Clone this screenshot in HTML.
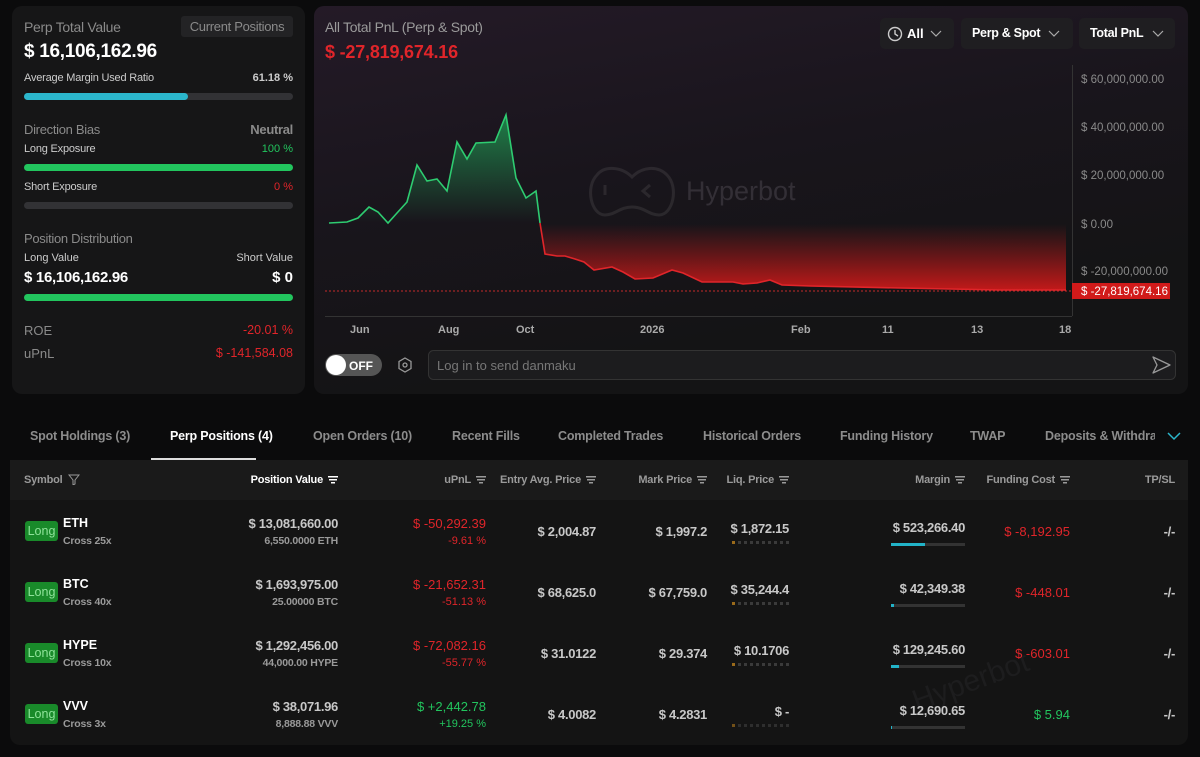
<!DOCTYPE html>
<html><head><meta charset="utf-8">
<style>
*{box-sizing:border-box;margin:0;padding:0}
body{width:1200px;height:757px;background:#0b0b0c;font-family:"Liberation Sans",sans-serif;color:#ddd;position:relative;overflow:hidden}
.a{position:absolute;white-space:nowrap}
.card{position:absolute;border-radius:10px}
.g{color:#8a8a8a}
.red{color:#e0252a}
.grn{color:#22c55e}
.bar{position:absolute;height:7px;border-radius:4px;background:#323235}
.r{text-align:right}
.b{font-weight:bold}
.hd{font-size:11px;color:#9a9a9a;font-weight:bold;letter-spacing:-.2px}
.tab{font-size:12.5px;font-weight:bold;color:#8c8c8c;top:429px;letter-spacing:-.2px}
.v{font-size:13px;font-weight:bold;color:#c8c8c8;letter-spacing:-.3px}
.s{font-size:10.5px;font-weight:bold;color:#9a9a9a;letter-spacing:-.2px}
.long{position:absolute;left:25px;width:33px;height:20px;background:#198a2a;color:#8fe39a;border-radius:3px;font-size:12.5px;text-align:center;line-height:20px}
.sym{font-size:12.5px;font-weight:bold;color:#fff;left:63px}
.dots{position:absolute;height:3px;width:58px;background:repeating-linear-gradient(90deg,#3a3a3a 0 3px,transparent 3px 6px)}
.dots:before{content:"";position:absolute;left:0;top:0;width:3px;height:3px;background:#9a6a1a}
.mb{position:absolute;left:891px;width:74px;height:3px;background:#333}
.mb i{position:absolute;left:0;top:0;height:3px;background:#22b3c8}
.fi{display:inline-block;width:10px;height:8px;margin-left:5px;vertical-align:middle;background:linear-gradient(#999,#999) 0 0/10px 1.5px no-repeat,linear-gradient(#999,#999) 1px 3px/8px 1.5px no-repeat,linear-gradient(#999,#999) 3px 6px/4px 1.5px no-repeat}
</style></head><body>

<!-- left card -->
<div class="card" style="left:12px;top:6px;width:293px;height:388px;background:#161617"></div>
<div class="a g" style="left:24px;top:19px;font-size:14px;letter-spacing:-.3px">Perp Total Value</div>
<div class="a" style="left:181px;top:16px;width:112px;height:21px;background:#232325;border-radius:3px;color:#8a8a8a;font-size:13px;text-align:center;line-height:21px;letter-spacing:-.3px">Current Positions</div>
<div class="a b" style="left:24px;top:41px;font-size:19px;color:#fff;letter-spacing:-.3px">$ 16,106,162.96</div>
<div class="a" style="left:24px;top:72px;font-size:11px;color:#ccc;letter-spacing:-.2px">Average Margin Used Ratio</div>
<div class="a b r" style="right:907px;top:72px;font-size:11px;color:#ccc">61.18 %</div>
<div class="bar" style="left:24px;top:93px;width:269px"></div>
<div class="bar" style="left:24px;top:93px;width:164px;background:#2bb6cc"></div>
<div class="a g" style="left:24px;top:122px;font-size:13px;letter-spacing:-.3px">Direction Bias</div>
<div class="a b g" style="right:907px;top:122px;font-size:13px;letter-spacing:-.3px">Neutral</div>
<div class="a" style="left:24px;top:143px;font-size:11px;color:#ccc;letter-spacing:-.2px">Long Exposure</div>
<div class="a grn" style="right:907px;top:143px;font-size:11px">100 %</div>
<div class="bar" style="left:24px;top:164px;width:269px;background:#22c55e"></div>
<div class="a" style="left:24px;top:181px;font-size:11px;color:#ccc;letter-spacing:-.2px">Short Exposure</div>
<div class="a red" style="right:907px;top:181px;font-size:11px">0 %</div>
<div class="bar" style="left:24px;top:202px;width:269px"></div>
<div class="a g" style="left:24px;top:231px;font-size:13px;letter-spacing:-.3px">Position Distribution</div>
<div class="a" style="left:24px;top:252px;font-size:11px;color:#ccc">Long Value</div>
<div class="a" style="right:907px;top:252px;font-size:11px;color:#ccc">Short Value</div>
<div class="a b" style="left:24px;top:269px;font-size:15px;color:#fff;letter-spacing:-.3px">$ 16,106,162.96</div>
<div class="a b" style="right:907px;top:269px;font-size:15px;color:#fff">$ 0</div>
<div class="bar" style="left:24px;top:294px;width:269px;background:#22c55e"></div>
<div class="a g" style="left:24px;top:323px;font-size:13px">ROE</div>
<div class="a red" style="right:907px;top:323px;font-size:12.5px">-20.01 %</div>
<div class="a g" style="left:24px;top:346px;font-size:13px">uPnL</div>
<div class="a red" style="right:907px;top:346px;font-size:12.5px">$ -141,584.08</div>

<!-- chart card -->
<div class="card" style="left:314px;top:6px;width:874px;height:388px;background:linear-gradient(170deg,#241a27 0%,#19151c 40%,#141415 75%)"></div>
<div class="a" style="left:325px;top:19px;font-size:14px;color:#9a9a9a;letter-spacing:-.3px">All Total PnL (Perp &amp; Spot)</div>
<div class="a b red" style="left:325px;top:42px;font-size:18px;letter-spacing:-.2px">$ -27,819,674.16</div>
<div class="a" style="left:880px;top:18px;width:74px;height:31px;background:#1f1e21;border-radius:5px"></div>
<svg class="a" style="left:887px;top:26px" width="16" height="16" viewBox="0 0 16 16"><circle cx="8" cy="8" r="6.5" fill="none" stroke="#ccc" stroke-width="1.4"/><path d="M8 4v4l3 2" fill="none" stroke="#ccc" stroke-width="1.4"/></svg>
<div class="a b" style="left:907px;top:26px;font-size:13px;color:#fff">All</div>
<div class="a" style="left:961px;top:18px;width:112px;height:31px;background:#1f1e21;border-radius:5px"></div>
<div class="a b" style="left:972px;top:26px;font-size:12.5px;color:#fff;letter-spacing:-.3px">Perp &amp; Spot</div>
<div class="a" style="left:1079px;top:18px;width:96px;height:31px;background:#1f1e21;border-radius:5px"></div>
<div class="a b" style="left:1090px;top:26px;font-size:12.5px;color:#fff;letter-spacing:-.3px">Total PnL</div>
<svg class="a" style="left:0;top:0" width="1200" height="60"><g fill="none" stroke="#aaa" stroke-width="1.2"><path d="M931 31l5 5 5-5"/><path d="M1049 31l5 5 5-5"/><path d="M1153 31l5 5 5-5"/></g></svg>

<svg class="a" style="left:0;top:0" width="1200" height="400">
<defs>
<linearGradient id="gg" x1="0" y1="115" x2="0" y2="223" gradientUnits="userSpaceOnUse"><stop offset="0" stop-color="#1f8a4c" stop-opacity=".9"/><stop offset="1" stop-color="#1f8a4c" stop-opacity="0"/></linearGradient>
<linearGradient id="rg" x1="0" y1="224" x2="0" y2="292" gradientUnits="userSpaceOnUse"><stop offset="0" stop-color="#c01818" stop-opacity="0"/><stop offset="1" stop-color="#d11a1a" stop-opacity=".95"/></linearGradient>
</defs>
<g opacity=".2" fill="none" stroke="#777" stroke-width="3"><path d="M597 175c8-10 25-8 35 2 10-10 25-12 35-2 12 12 6 40-8 40-10 0-15-8-27-8s-17 8-27 8c-14 0-20-28-8-40z"/><path d="M605 185v10M650 185l-7 6 7 6"/></g>
<text x="686" y="200" font-family="Liberation Sans" font-size="27" fill="#332f36">Hyperbot</text>
<path d="M540 223L545 254L557 256L565 256L575 259L584 262L594 270L612 267L623 272L635 279L653 278L672 270L683 273L702 282L733 282L743 284L757 283L770 280L782 285L810 286L900 288L1000 290L1066 290L1066 224Z" fill="url(#rg)"/>
<path d="M329 223L347 222L358 218L369 207L378 212L388 223L397 213L407 202L417 165L427 181L437 179L447 191L457 142L467 159L476 143L495 142L506 115L516 178L526 198L536 191L540 223Z" fill="url(#gg)"/>
<path d="M329 223L347 222L358 218L369 207L378 212L388 223L397 213L407 202L417 165L427 181L437 179L447 191L457 142L467 159L476 143L495 142L506 115L516 178L526 198L536 191L540 223" fill="none" stroke="#2ecc71" stroke-width="1.6"/>
<path d="M540 223L545 254L557 256L565 256L575 259L584 262L594 270L612 267L623 272L635 279L653 278L672 270L683 273L702 282L733 282L743 284L757 283L770 280L782 285L810 286L900 288L1000 290L1066 290" fill="none" stroke="#e0252a" stroke-width="1.6"/>
<path d="M325 291H1072" stroke="#c42a2a" stroke-width="1" stroke-dasharray="2 2"/>
<path d="M325 316.5H1072M1072.5 65V316" stroke="#333" stroke-width="1"/>
<g font-family="Liberation Sans" font-size="11.5" fill="#8a8a8a">
<text x="1081" y="83">$ 60,000,000.00</text><text x="1081" y="131">$ 40,000,000.00</text><text x="1081" y="179">$ 20,000,000.00</text><text x="1081" y="228">$ 0.00</text><text x="1081" y="275">$ -20,000,000.00</text>
</g>
<rect x="1072" y="283" width="98" height="16" fill="#d11a1a"/>
<text x="1081" y="295" font-family="Liberation Sans" font-size="11.5" fill="#fff">$ -27,819,674.16</text>
<g font-family="Liberation Sans" font-size="11" fill="#aaa" font-weight="bold">
<text x="350" y="333">Jun</text><text x="438" y="333">Aug</text><text x="516" y="333">Oct</text><text x="640" y="333">2026</text><text x="791" y="333">Feb</text><text x="882" y="333">11</text><text x="971" y="333">13</text><text x="1059" y="333">18</text>
</g>
<rect x="325" y="354" width="57" height="22" rx="11" fill="#555"/><circle cx="336" cy="365" r="10" fill="#fff"/>
<text x="349" y="370" font-family="Liberation Sans" font-size="12" fill="#fff" font-weight="bold">OFF</text>
<path d="M405 358l6 3.5v7l-6 3.5-6-3.5v-7z" fill="none" stroke="#999" stroke-width="1.3"/><circle cx="405" cy="365" r="2" fill="none" stroke="#999" stroke-width="1.3"/>
<rect x="428.5" y="350.5" width="747" height="29" rx="5" fill="#1c1c1e" stroke="#333"/>
<text x="437" y="370" font-family="Liberation Sans" font-size="13" fill="#777">Log in to send danmaku</text>
<path d="M1153 357l17 8-17 8 4-8z" fill="none" stroke="#999" stroke-width="1.3" stroke-linejoin="round"/>
</svg>

<!-- tabs -->
<div class="a tab" style="left:30px">Spot Holdings (3)</div>
<div class="a tab" style="left:170px;color:#fff">Perp Positions (4)</div>
<div class="a" style="left:151px;top:458px;width:105px;height:2px;background:#ddd"></div>
<div class="a tab" style="left:313px">Open Orders (10)</div>
<div class="a tab" style="left:452px">Recent Fills</div>
<div class="a tab" style="left:558px">Completed Trades</div>
<div class="a tab" style="left:703px">Historical Orders</div>
<div class="a tab" style="left:840px">Funding History</div>
<div class="a tab" style="left:970px">TWAP</div>
<div class="a tab" style="left:1045px;width:110px;overflow:hidden">Deposits &amp; Withdrawals</div>
<svg class="a" style="left:1166px;top:430px" width="16" height="12"><path d="M2 3l6 6 6-6" fill="none" stroke="#2bb6cc" stroke-width="1.5"/></svg>

<!-- table -->
<div class="card" style="left:10px;top:460px;width:1178px;height:285px;background:#141414;border-radius:0 0 10px 10px"></div>
<div class="a" style="left:910px;top:665px;font-size:30px;color:#1d1d1e;transform:rotate(-20deg)">Hyperbot</div>
<div class="a" style="left:10px;top:460px;width:1178px;height:40px;background:#1a1a1a"></div>
<div class="a hd" style="left:24px;top:474px">Symbol <svg width="12" height="11" style="vertical-align:-2px;margin-left:3px"><path d="M1 1h10L7 6v4L5 11V6z" fill="none" stroke="#999"/></svg></div>
<div class="a hd r" style="right:862px;top:474px;color:#fff">Position Value<span class="fi" style="background:linear-gradient(#fff,#fff) 0 0/10px 1.5px no-repeat,linear-gradient(#fff,#fff) 1px 3px/8px 1.5px no-repeat,linear-gradient(#fff,#fff) 3px 6px/4px 1.5px no-repeat"></span></div>
<div class="a hd r" style="right:714px;top:474px">uPnL<span class="fi"></span></div>
<div class="a hd r" style="right:604px;top:474px">Entry Avg. Price<span class="fi"></span></div>
<div class="a hd r" style="right:493px;top:474px">Mark Price<span class="fi"></span></div>
<div class="a hd r" style="right:411px;top:474px">Liq. Price<span class="fi"></span></div>
<div class="a hd r" style="right:235px;top:474px">Margin<span class="fi"></span></div>
<div class="a hd r" style="right:130px;top:474px">Funding Cost<span class="fi"></span></div>
<div class="a hd r" style="right:25px;top:474px">TP/SL</div>

<!-- row 1 -->
<div class="long" style="top:521px">Long</div>
<div class="a sym" style="top:516px">ETH</div><div class="a s" style="left:63px;top:535px">Cross 25x</div>
<div class="a v r" style="right:862px;top:516px">$ 13,081,660.00</div><div class="a s r" style="right:862px;top:535px">6,550.0000 ETH</div>
<div class="a red r" style="right:714px;top:516px;font-size:13px">$ -50,292.39</div><div class="a red r" style="right:714px;top:535px;font-size:11px">-9.61 %</div>
<div class="a v r" style="right:604px;top:524px">$ 2,004.87</div>
<div class="a v r" style="right:493px;top:524px">$ 1,997.2</div>
<div class="a v r" style="right:411px;top:521px">$ 1,872.15</div><div class="dots" style="left:732px;top:541px"></div>
<div class="a v r" style="right:235px;top:520px">$ 523,266.40</div><div class="mb" style="top:543px"><i style="width:34px"></i></div>
<div class="a red r" style="right:130px;top:524px;font-size:13px">$ -8,192.95</div>
<div class="a v r" style="right:25px;top:524px">-/-</div>

<!-- row 2 -->
<div class="long" style="top:582px">Long</div>
<div class="a sym" style="top:577px">BTC</div><div class="a s" style="left:63px;top:596px">Cross 40x</div>
<div class="a v r" style="right:862px;top:577px">$ 1,693,975.00</div><div class="a s r" style="right:862px;top:596px">25.00000 BTC</div>
<div class="a red r" style="right:714px;top:577px;font-size:13px">$ -21,652.31</div><div class="a red r" style="right:714px;top:596px;font-size:11px">-51.13 %</div>
<div class="a v r" style="right:604px;top:585px">$ 68,625.0</div>
<div class="a v r" style="right:493px;top:585px">$ 67,759.0</div>
<div class="a v r" style="right:411px;top:582px">$ 35,244.4</div><div class="dots" style="left:732px;top:602px"></div>
<div class="a v r" style="right:235px;top:581px">$ 42,349.38</div><div class="mb" style="top:604px"><i style="width:3px"></i></div>
<div class="a red r" style="right:130px;top:585px;font-size:13px">$ -448.01</div>
<div class="a v r" style="right:25px;top:585px">-/-</div>

<!-- row 3 -->
<div class="long" style="top:643px">Long</div>
<div class="a sym" style="top:638px">HYPE</div><div class="a s" style="left:63px;top:657px">Cross 10x</div>
<div class="a v r" style="right:862px;top:638px">$ 1,292,456.00</div><div class="a s r" style="right:862px;top:657px">44,000.00 HYPE</div>
<div class="a red r" style="right:714px;top:638px;font-size:13px">$ -72,082.16</div><div class="a red r" style="right:714px;top:657px;font-size:11px">-55.77 %</div>
<div class="a v r" style="right:604px;top:646px">$ 31.0122</div>
<div class="a v r" style="right:493px;top:646px">$ 29.374</div>
<div class="a v r" style="right:411px;top:643px">$ 10.1706</div><div class="dots" style="left:732px;top:663px"></div>
<div class="a v r" style="right:235px;top:642px">$ 129,245.60</div><div class="mb" style="top:665px"><i style="width:8px"></i></div>
<div class="a red r" style="right:130px;top:646px;font-size:13px">$ -603.01</div>
<div class="a v r" style="right:25px;top:646px">-/-</div>

<!-- row 4 -->
<div class="long" style="top:704px">Long</div>
<div class="a sym" style="top:699px">VVV</div><div class="a s" style="left:63px;top:718px">Cross 3x</div>
<div class="a v r" style="right:862px;top:699px">$ 38,071.96</div><div class="a s r" style="right:862px;top:718px">8,888.88 VVV</div>
<div class="a grn r" style="right:714px;top:699px;font-size:13px">$ +2,442.78</div><div class="a grn r" style="right:714px;top:718px;font-size:11px">+19.25 %</div>
<div class="a v r" style="right:604px;top:707px">$ 4.0082</div>
<div class="a v r" style="right:493px;top:707px">$ 4.2831</div>
<div class="a v r" style="right:411px;top:704px">$ -</div><div class="dots" style="left:732px;top:724px;opacity:.7"></div>
<div class="a v r" style="right:235px;top:703px">$ 12,690.65</div><div class="mb" style="top:726px"><i style="width:1px"></i></div>
<div class="a grn r" style="right:130px;top:707px;font-size:13px">$ 5.94</div>
<div class="a v r" style="right:25px;top:707px">-/-</div>
</body></html>
